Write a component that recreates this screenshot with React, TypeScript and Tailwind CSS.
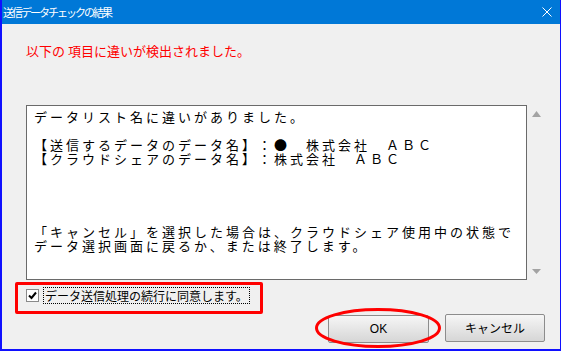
import React from 'react';

const jp = "font-['Noto_Sans_CJK_JP',sans-serif]";

const App = () => {
  const lines = [
    'データリスト名に違いがありました。',
    '',
    '【送信するデータのデータ名】：●　株式会社　ＡＢＣ',
    '【クラウドシェアのデータ名】：株式会社　ＡＢＣ',
  ];
  const lines2 = [
    '「キャンセル」を選択した場合は、クラウドシェア使用中の状態で',
    'データ選択画面に戻るか、または終了します。',
  ];

  return (
    <div className={`w-[562px] h-[352px] bg-white ${jp} [text-spacing-trim:space-all]`}>
      <div className="w-[561px] h-[351px] border-l-2 border-r border-b-2 border-[#1010ff] bg-[#f0f0f0] flex flex-col">
        {/* title bar */}
        <div className="h-[24px] bg-[#0078d7] flex items-center justify-between pl-[1px] pr-[8px]">
          <span className="text-white text-[11px] tracking-[-2px] leading-none">送信データチェックの結果</span>
          <svg width="10" height="10" viewBox="0 0 10 10">
            <path d="M0.5 0.5 L9.5 9.5 M9.5 0.5 L0.5 9.5" stroke="#fff" strokeWidth="1" />
          </svg>
        </div>

        <div className="mt-[20px] ml-[24px] h-[13px] text-[13px] leading-[13px] text-[#ff0000] whitespace-pre">
          以下の 項目に違いが検出されました。
        </div>

        <div className="mt-[48px] flex">
          <div className="ml-[24px] w-[501px] h-[175px] border border-[#6a6a6a] bg-white pt-[4px] pl-[7px] text-[13px] leading-[14px] tracking-[3px] text-black whitespace-pre overflow-hidden">
            {lines.map((l, i) => (
              <div key={i} className="h-[14px]">{l}</div>
            ))}
            <div className="mt-[59px]">
              {lines2.map((l, i) => (
                <div key={i} className="h-[14px]">{l}</div>
              ))}
            </div>
          </div>
          <div className="w-[18px] flex flex-col items-center justify-between pt-[6px] pb-[6px]">
            <svg width="9" height="6" viewBox="0 0 9 6">
              <path d="M4.5 0 L9 6 L0 6 Z" fill="#a3a3a3" />
            </svg>
            <svg width="9" height="5" viewBox="0 0 9 5">
              <path d="M0 0 L9 0 L4.5 5 Z" fill="#a3a3a3" />
            </svg>
          </div>
        </div>

        <div className="mt-[2px] ml-[13px] w-[248px] h-[32px] border-[3px] border-[#ff0000] rounded-[2px] flex items-start pl-[8px] pt-[2px]">
          <span className="mt-[2px] w-[13px] h-[13px] border border-[#8a8a8a] bg-white flex items-center justify-center">
            <svg width="9" height="9" viewBox="0 0 9 9">
              <path d="M1 4.5 L3.5 7 L8 1.5" stroke="#000" strokeWidth="2" fill="none" />
            </svg>
          </span>
          <span className="ml-[4px] h-[17px] border border-dotted border-black px-[1px] text-[12px] leading-[15px] text-black">
            データ送信処理の続行に同意します。
          </span>
        </div>

        <div className="flex justify-end gap-[16px] pr-[15px]">
          <div className="relative">
            <button className="w-[101px] h-[28px] border border-[#8c8c8c] rounded-[2px] bg-gradient-to-b from-[#f6f6f6] to-[#d6d6d6] text-[12px] font-normal text-black font-['Liberation_Sans',sans-serif]">
              OK
            </button>
            <svg className="absolute left-[-13px] top-[-6px]" width="126" height="40" viewBox="0 0 126 40">
              <ellipse cx="63" cy="20" rx="61.5" ry="18.5" fill="none" stroke="#ff0000" strokeWidth="3" />
            </svg>
          </div>
          <button className="w-[100px] h-[28px] border border-[#8c8c8c] rounded-[2px] bg-gradient-to-b from-[#f6f6f6] to-[#d6d6d6] text-[12px] text-black">
            キャンセル
          </button>
        </div>
      </div>
    </div>
  );
};

export default App;
